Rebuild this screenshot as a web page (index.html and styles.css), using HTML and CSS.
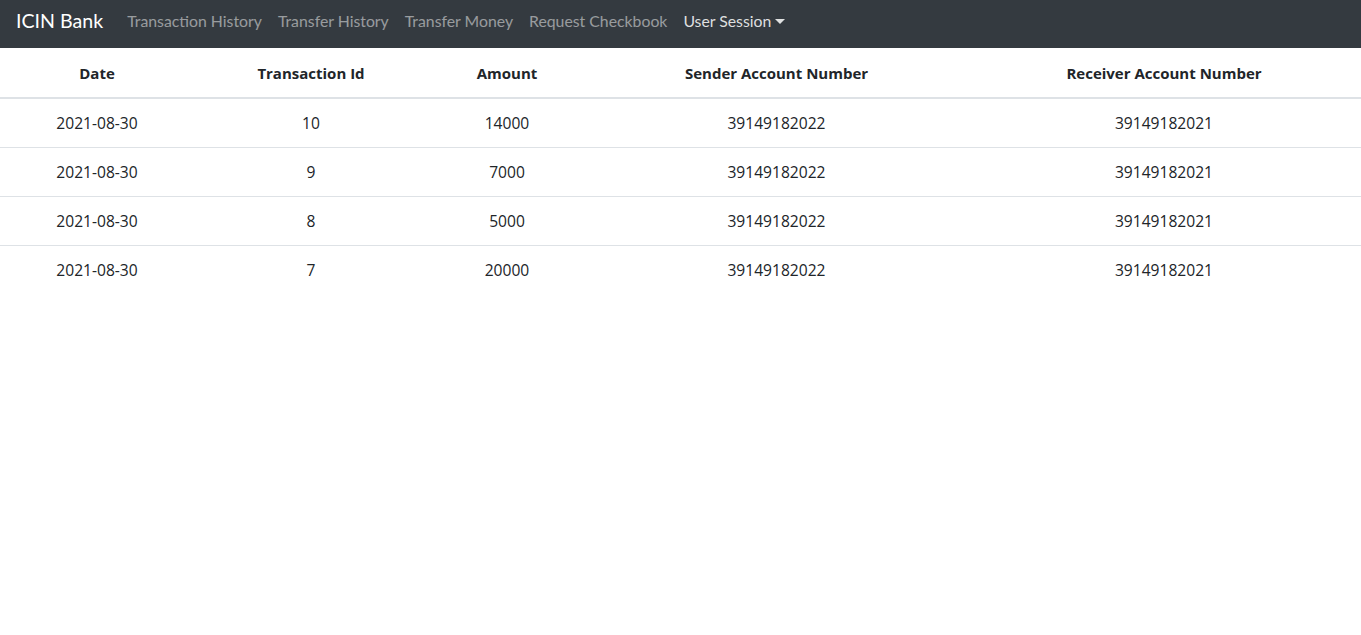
FILE: index.html
```html
<!DOCTYPE html>
<html>
<head>
<meta charset="utf-8">
<link rel="stylesheet" href="styles.css">
</head>
<body>
<nav class="navbar">
  <a class="brand" href="#">ICIN Bank</a>
  <ul class="nav">
    <li><a class="nav-link" href="#">Transaction History</a></li>
    <li><a class="nav-link" href="#">Transfer History</a></li>
    <li><a class="nav-link" href="#">Transfer Money</a></li>
    <li><a class="nav-link" href="#">Request Checkbook</a></li>
    <li><a class="nav-link session" href="#">User Session<span class="caret"></span></a></li>
  </ul>
</nav>
<table class="table">
  <colgroup>
    <col class="c1"><col class="c2"><col class="c3"><col class="c4"><col class="c5">
  </colgroup>
  <thead>
    <tr><th>Date</th><th>Transaction Id</th><th>Amount</th><th>Sender Account Number</th><th>Receiver Account Number</th></tr>
  </thead>
  <tbody>
    <tr><td>2021-08-30</td><td>10</td><td>14000</td><td>39149182022</td><td>39149182021</td></tr>
    <tr><td>2021-08-30</td><td>9</td><td>7000</td><td>39149182022</td><td>39149182021</td></tr>
    <tr><td>2021-08-30</td><td>8</td><td>5000</td><td>39149182022</td><td>39149182021</td></tr>
    <tr><td>2021-08-30</td><td>7</td><td>20000</td><td>39149182022</td><td>39149182021</td></tr>
  </tbody>
</table>
</body>
</html>
```
FILE: styles.css
```css
* { box-sizing: border-box; }
body {
  margin: 0;
  font-family: Lato, "Open Sans", sans-serif;
  font-size: 16px;
  line-height: 24px;
  color: #212529;
  background: #fff;
}
a { text-decoration: none; }
.navbar {
  display: flex;
  align-items: center;
  height: 48px;
  padding: 0 16px 6px;
  background: #343a40;
}
.brand {
  font-size: 19.6px;
  line-height: 30px;
  color: #fff;
  margin-right: 16px;
}
.nav {
  display: flex;
  list-style: none;
  margin: 0;
  padding: 0;
}
.nav-link {
  display: block;
  padding: 0 8px;
  font-size: 15.8px;
  color: rgba(255, 255, 255, 0.5);
  line-height: 24px;
}
.nav-link.session { color: rgba(255, 255, 255, 0.85); }
.caret {
  display: inline-block;
  margin-left: 4px;
  vertical-align: 3px;
  border-top: 5px solid;
  border-left: 5px solid transparent;
  border-right: 5px solid transparent;
}
.table {
  width: 100%;
  border-collapse: collapse;
  table-layout: fixed;
  font-family: "Open Sans", Lato, sans-serif;
}
.c1 { width: 194px; }
.c2 { width: 234px; }
.c3 { width: 158px; }
.c4 { width: 381px; }
.c5 { width: 394px; }
.table th, .table td {
  padding: 12px;
  text-align: center;
  border-top: 1px solid #dee2e6;
  height: 49px;
}
.table td { font-size: 15.6px; }
.table th {
  font-size: 15px;
  font-weight: 700;
  border-bottom: 2px solid #dee2e6;
  height: 50px;
  border-top: none;
}
.table tbody tr:first-child td { border-top: none; }
```
